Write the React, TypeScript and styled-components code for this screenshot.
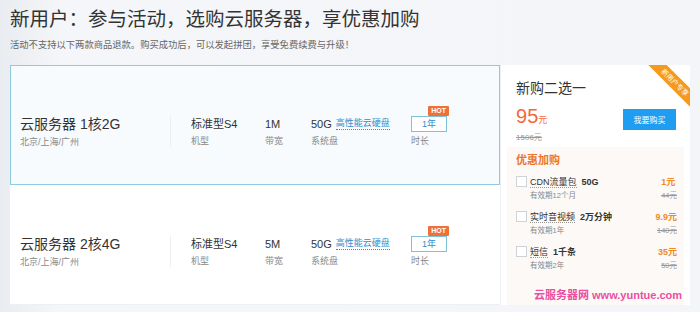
import React from "react";
import styled, { createGlobalStyle } from "styled-components";

const GlobalStyle = createGlobalStyle`
  html, body { margin: 0; padding: 0; }
  body {
    background: #f2f4f7;
    font-family: "Liberation Sans", "Noto Sans CJK SC", sans-serif;
    color: #333;
    width: 700px;
    height: 312px;
    overflow: hidden;
  }
`;

const Page = styled.div`
  padding: 0 10px;
  position: relative;
  height: 312px;
  background: linear-gradient(90deg, #e9ecf0 0, #f4f6f9 60px, #f3f5f8 100%);
`;

const Title = styled.h1`
  margin: 0;
  padding-top: 5px;
  font-size: 19.5px;
  line-height: 28px;
  font-weight: 400;
  color: #333;
`;

const Subtitle = styled.p`
  margin: 5px 0 0;
  font-size: 9.3px;
  line-height: 14px;
  color: #666;
`;

const Main = styled.div`
  display: flex;
  margin-top: 13px;
  height: 240px;
`;

const Plans = styled.div`
  width: 493px;
  display: flex;
  flex-direction: column;
`;

const Card = styled.div<{ $active?: boolean }>`
  height: 120px;
  box-sizing: border-box;
  display: flex;
  align-items: center;
  padding-top: 12px;
  background: ${(p) => (p.$active ? "#f7fbfd" : "#fff")};
  border: 1px solid ${(p) => (p.$active ? "#8ccbe0" : "#fff")};
  border-bottom-color: ${(p) => (p.$active ? "#8ccbe0" : "#eceff3")};
`;

const NameBlock = styled.div`
  width: 159px;
  padding-left: 9px;
  box-sizing: border-box;
`;

const Name = styled.div`
  font-size: 14px;
  line-height: 18px;
  color: #333;
`;

const Region = styled.div`
  margin-top: 3px;
  font-size: 9px;
  line-height: 12px;
  color: #888;
`;

const Divider = styled.div`
  width: 1px;
  height: 32px;
  background: #edf0f3;
  margin-right: 20px;
`;

const Spec = styled.div<{ $w: number }>`
  width: ${(p) => p.$w}px;
  position: relative;
`;

const SpecValue = styled.div`
  font-size: 11px;
  line-height: 16px;
  color: #333;
  height: 16px;
  display: flex;
  align-items: center;
  white-space: nowrap;
`;

const SpecLabel = styled.div`
  margin-top: 3px;
  font-size: 9px;
  line-height: 12px;
  color: #888;
`;

const DiskLink = styled.span`
  margin-left: 4px;
  font-size: 9px;
  color: #2a8fd0;
  border-bottom: 1px dotted #2a8fd0;
  line-height: 11px;
`;

const DurationBox = styled.div`
  width: 36px;
  height: 16px;
  box-sizing: border-box;
  border: 1px solid #7fc2d8;
  background: #fff;
  font-size: 9px;
  line-height: 14px;
  text-align: center;
  color: #2a8fd0;
  position: relative;
`;

const Hot = styled.span`
  position: absolute;
  top: -11px;
  right: -3px;
  background: #f0703a;
  color: #fff;
  font-size: 7px;
  font-weight: 700;
  line-height: 10px;
  padding: 0 3px;
  border-radius: 1px;
`;

const Side = styled.div`
  width: 191px;
  background: #fff;
  border-left: 1px solid #eceff3;
  position: relative;
  overflow: hidden;
  box-sizing: border-box;
  padding: 0 6px;
`;

const Ribbon = styled.div`
  position: absolute;
  top: 11px;
  right: -18px;
  width: 66px;
  height: 13px;
  background: #f59a1d;
  color: #fff;
  font-size: 7px;
  line-height: 13px;
  text-align: center;
  transform: rotate(45deg);
`;

const SideHead = styled.div`
  padding: 14px 0 0 9px;
`;

const Combo = styled.div`
  font-size: 14px;
  line-height: 18px;
  color: #333;
`;

const PriceRow = styled.div`
  display: flex;
  justify-content: space-between;
  align-items: flex-start;
  margin-top: 8px;
  padding-right: 8px;
`;

const Price = styled.div`
  color: #f2693c;
  font-size: 20px;
  line-height: 22px;
  small {
    font-size: 9px;
  }
`;

const OldPrice = styled.div`
  margin-top: 2px;
  font-size: 8px;
  line-height: 10px;
  color: #999;
  text-decoration: line-through;
`;

const BuyButton = styled.button`
  margin-top: 4px;
  width: 53px;
  height: 21px;
  border: 0;
  background: #1f9ef1;
  color: #fff;
  font-size: 8px;
  font-family: inherit;
  padding: 0;
`;

const Extras = styled.div`
  margin-top: 4px;
  background: #fdf9f6;
  padding: 5px 7px 6px 9px;
  height: 150px;
`;

const ExtrasTitle = styled.div`
  color: #ea752d;
  font-size: 11px;
  font-weight: 700;
  line-height: 16px;
  margin-bottom: 7px;
`;

const Item = styled.div`
  display: grid;
  grid-template-columns: 14px 1fr auto;
  row-gap: 3px;
  align-items: center;
  margin-bottom: 9px;
`;

const Check = styled.span`
  width: 9px;
  height: 9px;
  border: 1px solid #cfd3d8;
  background: #fff;
`;

const ItemName = styled.div`
  font-size: 9px;
  line-height: 12px;
  color: #333;
  span {
    border-bottom: 1px dotted #999;
  }
  b {
    margin-left: 5px;
  }
`;

const ItemPrice = styled.div`
  font-size: 9px;
  font-weight: 700;
  color: #f08a24;
`;

const ItemSub = styled.div`
  grid-column: 2;
  font-size: 7.5px;
  line-height: 10px;
  color: #888;
`;

const ItemOld = styled.div`
  font-size: 7.5px;
  line-height: 10px;
  color: #999;
  text-decoration: line-through;
  text-align: right;
`;

const Watermark = styled.div`
  position: absolute;
  left: 534px;
  top: 286px;
  color: #ea4fa3;
  font-size: 11px;
  font-weight: 700;
  white-space: nowrap;
`;

const plans = [
  { name: "云服务器 1核2G", bw: "1M", active: true },
  { name: "云服务器 2核4G", bw: "5M", active: false },
];

const extras = [
  { name: "CDN流量包", amount: "50G", price: "1元", term: "有效期12个月", old: "44元" },
  { name: "实时音视频", amount: "2万分钟", price: "9.9元", term: "有效期1年", old: "140元" },
  { name: "短信", amount: "1千条", price: "35元", term: "有效期2年", old: "50元" },
];

export default function App() {
  return (
    <Page>
      <GlobalStyle />
      <Title>新用户：参与活动，选购云服务器，享优惠加购</Title>
      <Subtitle>活动不支持以下两款商品退款。购买成功后，可以发起拼团，享受免费续费与升级！</Subtitle>
      <Main>
        <Plans>
          {plans.map((p) => (
            <Card key={p.name} $active={p.active}>
              <NameBlock>
                <Name>{p.name}</Name>
                <Region>北京/上海/广州</Region>
              </NameBlock>
              <Divider />
              <Spec $w={74}>
                <SpecValue>标准型S4</SpecValue>
                <SpecLabel>机型</SpecLabel>
              </Spec>
              <Spec $w={46}>
                <SpecValue>{p.bw}</SpecValue>
                <SpecLabel>带宽</SpecLabel>
              </Spec>
              <Spec $w={100}>
                <SpecValue>
                  50G<DiskLink>高性能云硬盘</DiskLink>
                </SpecValue>
                <SpecLabel>系统盘</SpecLabel>
              </Spec>
              <Spec $w={60}>
                <DurationBox>
                  1年<Hot>HOT</Hot>
                </DurationBox>
                <SpecLabel>时长</SpecLabel>
              </Spec>
            </Card>
          ))}
        </Plans>
        <Side>
          <Ribbon>新用户专享</Ribbon>
          <SideHead>
            <Combo>新购二选一</Combo>
            <PriceRow>
              <div>
                <Price>
                  95<small>元</small>
                </Price>
                <OldPrice>1506元</OldPrice>
              </div>
              <BuyButton>我要购买</BuyButton>
            </PriceRow>
          </SideHead>
          <Extras>
            <ExtrasTitle>优惠加购</ExtrasTitle>
            {extras.map((e) => (
              <Item key={e.name}>
                <Check />
                <ItemName>
                  <span>{e.name}</span>
                  <b>{e.amount}</b>
                </ItemName>
                <ItemPrice>{e.price}</ItemPrice>
                <ItemSub>{e.term}</ItemSub>
                <ItemOld>{e.old}</ItemOld>
              </Item>
            ))}
          </Extras>
        </Side>
      </Main>
      <Watermark>云服务器网 www.yuntue.com</Watermark>
    </Page>
  );
}
